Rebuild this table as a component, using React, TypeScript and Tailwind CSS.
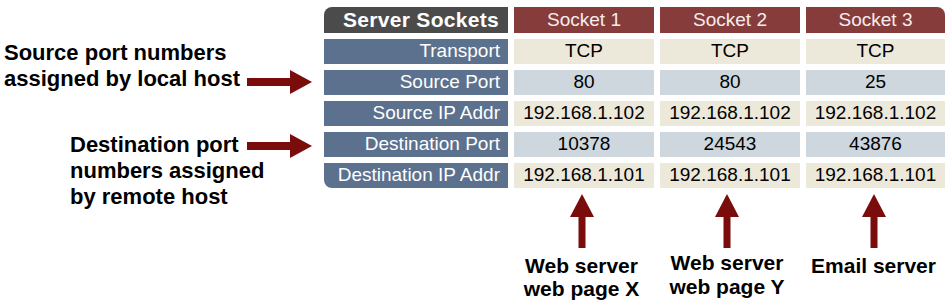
import React from 'react';

const FONT = { fontFamily: '"Liberation Sans", Arial, sans-serif' };

type Row = { label: string; values: string[]; tone: 'beige' | 'blue' };

const rows: Row[] = [
  { label: 'Transport', values: ['TCP', 'TCP', 'TCP'], tone: 'beige' },
  { label: 'Source Port', values: ['80', '80', '25'], tone: 'blue' },
  { label: 'Source IP Addr', values: ['192.168.1.102', '192.168.1.102', '192.168.1.102'], tone: 'beige' },
  { label: 'Destination Port', values: ['10378', '24543', '43876'], tone: 'blue' },
  { label: 'Destination IP Addr', values: ['192.168.1.101', '192.168.1.101', '192.168.1.101'], tone: 'beige' },
];

function RightArrow() {
  return (
    <svg width="65" height="24" viewBox="0 0 65 24" className="shrink-0">
      <rect x="0" y="8" width="44" height="8" fill="#7a0c0c" />
      <polygon points="43,0 65,12 43,24" fill="#7a0c0c" />
    </svg>
  );
}

function UpArrow() {
  return (
    <svg width="24" height="54" viewBox="0 0 24 54">
      <polygon points="12,0 24,23 0,23" fill="#7a0c0c" />
      <rect x="8.5" y="22" width="7" height="32" fill="#7a0c0c" />
    </svg>
  );
}

export default function App() {
  return (
    <div className="w-[949px] h-[306px] bg-white flex text-black overflow-hidden" style={FONT}>
      {/* Annotations on the left */}
      <div className="w-[324px] shrink-0 flex flex-col pt-[40px]">
        <div className="flex pl-[4px] pr-[12px]">
          <div className="flex-1 min-w-0 text-[22px] leading-[26px] font-bold whitespace-nowrap">
            Source port numbers
            <br />
            assigned by local host
          </div>
          <div className="mt-[30px] shrink-0">
            <RightArrow />
          </div>
        </div>
        <div className="flex pl-[70px] pr-[12px] mt-[38px]">
          <div className="flex-1 min-w-0 text-[22px] leading-[26px] font-bold whitespace-nowrap">
            Destination port
            <br />
            numbers assigned
            <br />
            by remote host
          </div>
          <div className="mt-[2px] shrink-0">
            <RightArrow />
          </div>
        </div>
      </div>

      {/* Table and the servers below it */}
      <div className="flex flex-col pt-[7px]">
        <div className="grid grid-cols-[184px_140px_140px_139px] gap-[6px]">
          <div className="h-[26px] bg-[#4b4b4b] rounded-tl-[8px] flex items-center justify-end pr-[9px] text-white font-bold text-[21px] tracking-[0.3px]">
            Server Sockets
          </div>
          {['Socket 1', 'Socket 2', 'Socket 3'].map((s, i) => (
            <div
              key={s}
              className={`h-[26px] bg-[#873c3c] flex items-center justify-center text-[#f5eded] text-[19px] ${
                i === 2 ? 'rounded-tr-[8px]' : ''
              }`}
            >
              {s}
            </div>
          ))}
          {rows.map((r, ri) => (
            <React.Fragment key={r.label}>
              <div
                className={`h-[25px] bg-[#5b718e] flex items-center justify-end pr-[8px] text-white text-[19px] whitespace-nowrap ${
                  ri === rows.length - 1 ? 'rounded-bl-[8px]' : ''
                }`}
              >
                {r.label}
              </div>
              {r.values.map((v, vi) => (
                <div
                  key={vi}
                  className={`h-[25px] flex items-center justify-center text-[19px] ${
                    r.tone === 'beige' ? 'bg-[#ece8da]' : 'bg-[#cdd7dd]'
                  }`}
                >
                  {v}
                </div>
              ))}
            </React.Fragment>
          ))}
        </div>

        <div className="flex gap-[6px] pl-[190px] pt-[6px]">
          <div className="w-[140px] flex flex-col items-center pr-[5px]">
            <UpArrow />
            <div className="mt-[6px] text-[21px] leading-[23px] font-bold text-center whitespace-nowrap">
              Web server
              <br />
              web page X
            </div>
          </div>
          <div className="w-[140px] flex flex-col items-center pr-[6px]">
            <UpArrow />
            <div className="mt-[3px] text-[21px] leading-[24px] font-bold text-center whitespace-nowrap">
              Web server
              <br />
              web page Y
            </div>
          </div>
          <div className="w-[139px] flex flex-col items-center pr-[4px]">
            <UpArrow />
            <div className="mt-[6px] text-[21px] leading-[23px] font-bold text-center whitespace-nowrap">
              Email server
            </div>
          </div>
        </div>
      </div>
    </div>
  );
}
